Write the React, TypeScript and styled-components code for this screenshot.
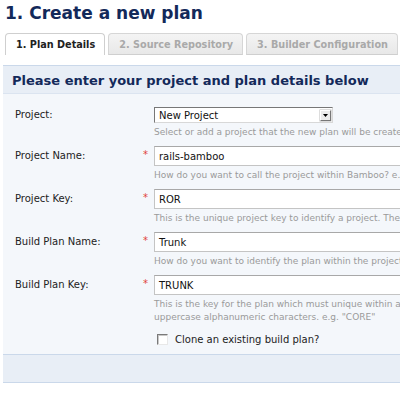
import React from "react";
import styled, { createGlobalStyle } from "styled-components";

const Global = createGlobalStyle`
  html, body { margin: 0; padding: 0; background: #fff; overflow: hidden; }
  body { font-family: "DejaVu Sans", Verdana, sans-serif; color: #222; }
`;

const Page = styled.div`
  width: 400px;
  height: 393px;
  overflow: hidden;
`;

const Title = styled.h1`
  margin: 0;
  padding: 2px 0 0 5px;
  font-size: 17px;
  line-height: 22px;
  font-weight: bold;
  color: #13295a;
  white-space: nowrap;
`;

const TabBar = styled.div`
  display: flex;
  gap: 3px;
  margin-top: 9px;
  padding-left: 5px;
`;

const Tab = styled.div<{ $active?: boolean }>`
  flex: none;
  height: 22px;
  box-sizing: border-box;
  padding: 0 9px 0 10px;
  display: flex;
  align-items: center;
  font-size: 9.7px;
  font-weight: bold;
  white-space: nowrap;
  border: 1px solid ${(p) => (p.$active ? "#cfcfcf" : "#d6d6d6")};
  border-bottom: ${(p) => (p.$active ? "none" : "1px solid #cfcfcf")};
  border-radius: 4px 4px 0 0;
  color: ${(p) => (p.$active ? "#222" : "#a9a9a9")};
  background: ${(p) =>
    p.$active ? "#fff" : "linear-gradient(#f4f4f4, #e8e8e8)"};
`;

const Panel = styled.div`
  margin: 10px 0 0 3px;
  width: 420px;
  background: #f4f7fb;
  border-top: 1px solid #cad8ea;
`;

const PanelHeader = styled.h2`
  margin: 0;
  height: 28px;
  box-sizing: border-box;
  padding: 2px 0 0 9px;
  display: flex;
  align-items: center;
  font-size: 13px;
  font-weight: bold;
  color: #13295a;
  background: #e8eef6;
  border-bottom: 1px solid #dbe4f0;
  white-space: nowrap;
`;

const Form = styled.div`
  padding: 13px 0 8px 12px;
  display: flex;
  flex-direction: column;
  gap: 7px;
`;

const Row = styled.div`
  display: grid;
  grid-template-columns: 128px 11px 1fr;
  align-items: start;
`;

const Label = styled.div<{ $h: number }>`
  font-size: 10px;
  line-height: ${(p) => p.$h}px;
  height: ${(p) => p.$h}px;
  color: #222;
  white-space: nowrap;
`;

const Required = styled.span<{ $h: number }>`
  font-size: 10px;
  line-height: ${(p) => p.$h - 3}px;
  color: #e0403a;
`;

const Field = styled.div`
  display: flex;
  flex-direction: column;
  min-width: 0;
`;

const Input = styled.div`
  height: 20px;
  box-sizing: border-box;
  width: 270px;
  padding-left: 4px;
  display: flex;
  align-items: center;
  font-size: 10px;
  color: #111;
  background: #fff;
  border: 1px solid #c4c4c4;
  border-top-color: #a8a8a8;
  white-space: nowrap;
`;

const Select = styled.div`
  height: 16px;
  width: 179px;
  box-sizing: border-box;
  display: flex;
  align-items: center;
  justify-content: space-between;
  padding: 0 1px 0 4px;
  font-size: 10px;
  color: #111;
  background: #fff;
  border: 1px solid #d8d8d8;
  border-top-color: #777;
  border-left-color: #777;
`;

const SelectButton = styled.span`
  width: 11px;
  height: 11px;
  box-sizing: border-box;
  display: flex;
  align-items: center;
  justify-content: center;
  background: #ececec;
  border: 1px solid #fff;
  border-right-color: #777;
  border-bottom-color: #777;
  box-shadow: 0 0 0 0.5px #bbb;
`;

const Hint = styled.div`
  margin-top: 3px;
  font-size: 9px;
  line-height: 13px;
  color: #9a9a9a;
  white-space: nowrap;
`;

const CheckRow = styled.label`
  display: flex;
  align-items: center;
  gap: 7px;
  margin: 1px 0 0 3px;
  height: 14px;
  font-size: 10px;
  color: #222;
`;

const Box = styled.span`
  width: 11px;
  height: 11px;
  box-sizing: border-box;
  background: #fff;
  border: 1px solid #e8e8e8;
  border-top-color: #7a7a7a;
  border-left-color: #7a7a7a;
  box-shadow: inset 1px 1px 0 #c8c8c8;
`;

const Footer = styled.div`
  height: 27px;
  background: #e8eef6;
  border-top: 1px solid #cad8ea;
  border-bottom: 1px solid #cad8ea;
`;

type FieldDef = {
  label: string;
  value: string;
  hint: string[];
};

const fields: FieldDef[] = [
  {
    label: "Project Name:",
    value: "rails-bamboo",
    hint: ["How do you want to call the project within Bamboo? e.g. \"Bamboo\""],
  },
  {
    label: "Project Key:",
    value: "ROR",
    hint: ["This is the unique project key to identify a project. The key"],
  },
  {
    label: "Build Plan Name:",
    value: "Trunk",
    hint: ["How do you want to identify the plan within the project? e.g."],
  },
  {
    label: "Build Plan Key:",
    value: "TRUNK",
    hint: [
      "This is the key for the plan which must unique within a project",
      "uppercase alphanumeric characters. e.g. \"CORE\"",
    ],
  },
];

export default function App() {
  return (
    <Page>
      <Global />
      <Title>1. Create a new plan</Title>
      <TabBar>
        <Tab $active>1. Plan Details</Tab>
        <Tab>2. Source Repository</Tab>
        <Tab>3. Builder Configuration</Tab>
      </TabBar>
      <Panel>
        <PanelHeader>Please enter your project and plan details below</PanelHeader>
        <Form>
          <Row>
            <Label $h={16}>Project:</Label>
            <span />
            <Field>
              <Select>
                New Project
                <SelectButton>
                  <svg width="5" height="3" viewBox="0 0 5 3">
                    <path d="M0 0H5L2.5 3Z" fill="#000" />
                  </svg>
                </SelectButton>
              </Select>
              <Hint>Select or add a project that the new plan will be created in</Hint>
            </Field>
          </Row>
          {fields.map((f) => (
            <Row key={f.label}>
              <Label $h={20}>{f.label}</Label>
              <Required $h={20}>*</Required>
              <Field>
                <Input>{f.value}</Input>
                <Hint>
                  {f.hint.map((h) => (
                    <div key={h}>{h}</div>
                  ))}
                </Hint>
              </Field>
            </Row>
          ))}
          <Row>
            <span />
            <span />
            <CheckRow>
              <Box />
              Clone an existing build plan?
            </CheckRow>
          </Row>
        </Form>
        <Footer />
      </Panel>
    </Page>
  );
}
